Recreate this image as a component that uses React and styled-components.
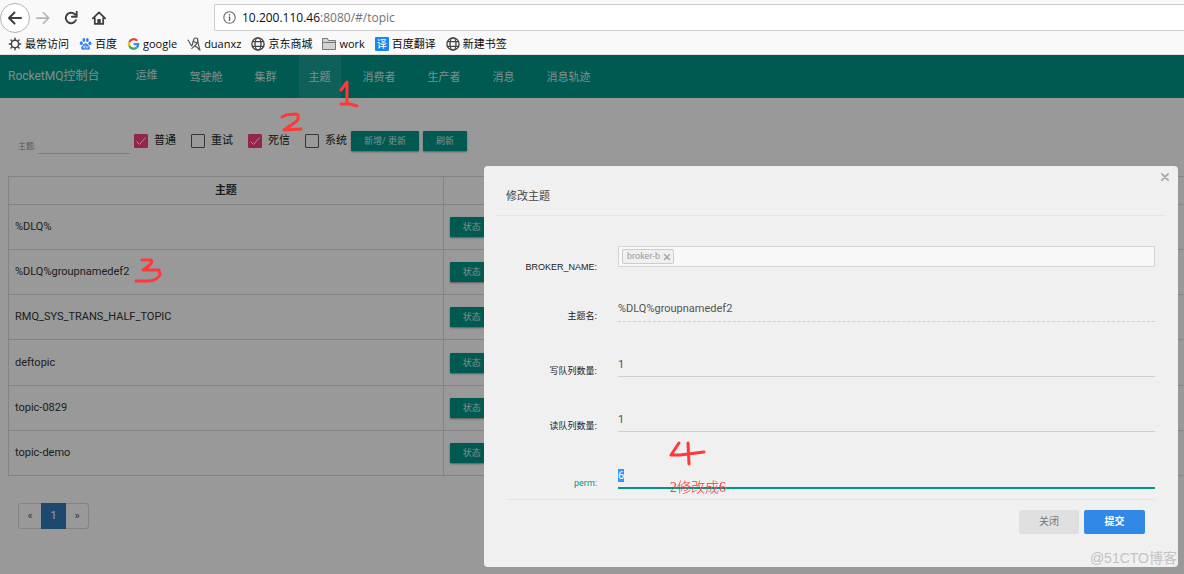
import React, { useEffect, useRef, useState } from "react";
import styled, { createGlobalStyle } from "styled-components";

const GlobalStyle = createGlobalStyle`
  *, *::before, *::after { box-sizing: border-box; }
  body { margin: 0; background: #fff; }
  button, input { font: inherit; }
`;

const ui = `Roboto, "Noto Sans CJK SC", sans-serif`;

const Shell = styled.div`
  position: relative;
  display: flex;
  flex-direction: column;
  min-height: 100vh;
  overflow: hidden;
  font-family: ${ui};
  font-size: 11px;
  line-height: 16px;
  color: #333;
`;

/* Browser chrome */
const Toolbar = styled.header`
  display: flex;
  align-items: center;
  gap: 14px;
  height: 35px;
  background: #f9f9fa;
`;

const NavButton = styled.button`
  display: flex;
  padding: 0;
  border: 0;
  background: none;
`;

const BackButton = styled(NavButton)`
  align-items: center;
  justify-content: center;
  width: 30px;
  height: 30px;
  margin-right: -8px;
  border: 1px solid #b5b5b6;
  border-radius: 50%;
  background: #fff;
`;

const AddressBar = styled.div`
  display: flex;
  flex: 1;
  align-items: center;
  gap: 6px;
  height: 27px;
  margin-left: 94px;
  padding-left: 8px;
  border: 1px solid #ccc;
  border-right: 0;
  border-radius: 2px 0 0 2px;
  background: #fff;
  font: 12px/20px "Open Sans", "Noto Sans", sans-serif;
  color: #737373;
`;

const Host = styled.span`
  color: #0c0c0d;
`;

const NavGroup = styled.div`
  display: flex;
  align-items: center;
  gap: 14px;
`;

const Bookmarks = styled.nav`
  display: flex;
  align-items: center;
  gap: 10px;
  height: 20px;
  padding: 0 8px 2px;
  background: #f9f9fa;
  border-bottom: 1px solid #e0e0e1;
`;

const Bookmark = styled.a`
  display: flex;
  align-items: center;
  gap: 3px;
  font: 11px/16px "Open Sans", "Noto Sans CJK SC", sans-serif;
  color: #0c0c0d;
  text-decoration: none;
  white-space: nowrap;
`;

/* Console page */
const Page = styled.div`
  position: relative;
  flex: 1;
  background: #fff;
`;

const TopNav = styled.nav`
  display: flex;
  align-items: stretch;
  gap: 12px;
  height: 43px;
  padding-left: 8px;
  background: #009688;
`;

const Brand = styled.a`
  padding: 13px 0;
  margin-right: 14px;
  font-size: 12px;
  color: rgba(255, 255, 255, 0.84);
  text-decoration: none;
  white-space: nowrap;
`;

const NavLink = styled.a`
  padding: ${(p) => (p.$raised ? "13px" : "15px")} 10px 0;
  background: ${(p) => (p.$active ? "rgba(255, 255, 255, 0.1)" : "transparent")};
  color: rgba(255, 255, 255, 0.84);
  text-decoration: none;
  white-space: nowrap;
`;

const Filters = styled.form`
  display: flex;
  align-items: flex-start;
  gap: 4px;
  height: 78px;
  padding: 33px 18px 0;
`;

const TopicFilter = styled.label`
  display: flex;
  align-items: flex-end;
  gap: 2px;
  height: 23px;
  font-size: 8px;
  line-height: 14px;
  color: #999;
`;

const TopicInput = styled.input`
  width: 92px;
  height: 23px;
  padding: 0;
  border: 0;
  border-bottom: 1px solid #d2d2d2;
  background: none;
`;

const CheckLabel = styled.label`
  display: flex;
  align-items: center;
  gap: 6px;
  height: 19px;
  margin-right: 11px;
  color: #222;
  white-space: nowrap;
  &:last-of-type { margin-right: 0; }
`;

const CheckBox = styled.input.attrs({ type: "checkbox" })`
  appearance: none;
  width: 14px;
  height: 14px;
  margin: 0;
  border: 1px solid #5a5a5a;
  border-radius: 1px;
  &:checked {
    border-color: #f53d7c;
    background: #f53d7c url("data:image/svg+xml,%3Csvg xmlns='http://www.w3.org/2000/svg' viewBox='0 0 12 12'%3E%3Cpath d='M1.5 6.5l3 3 6-7' fill='none' stroke='white'/%3E%3C/svg%3E");
  }
`;

const RaisedButton = styled.button`
  height: 20px;
  padding: 0 13px;
  border: 0;
  border-radius: 1px;
  background: #009688;
  box-shadow: 0 1px 2px rgba(0, 0, 0, 0.4);
  font-size: 9px;
  line-height: 20px;
  color: rgba(255, 255, 255, 0.84);
  white-space: nowrap;
`;

const TableWrap = styled.div`
  padding-left: 8px;
`;

const Table = styled.table`
  width: 100%;
  height: 300px;
  border-collapse: collapse;
  table-layout: fixed;
  border-left: 1px solid #ddd;
`;

const HeadCell = styled.th`
  width: ${(p) => p.$width};
  height: 28px;
  padding: 0 6px;
  border: 1px solid #ddd;
  border-right-color: ${(p) => (p.$last ? "transparent" : "#ddd")};
  font-weight: 700;
  text-align: center;
`;

const Cell = styled.td`
  padding: 0 6px;
  border: 1px solid #ddd;
  border-right-color: ${(p) => (p.$last ? "transparent" : "#ddd")};
  vertical-align: middle;
`;

const Pagination = styled.nav`
  display: flex;
  width: max-content;
  margin: 27px 18px;
  border: 1px solid #ddd;
  border-radius: 3px;
`;

const PageLink = styled.a`
  width: ${(p) => (p.$active ? "25px" : "22px")};
  margin: ${(p) => (p.$active ? "-1px 0" : "0")};
  line-height: ${(p) => (p.$active ? "26px" : "24px")};
  background: ${(p) => (p.$active ? "#337ab7" : "none")};
  color: ${(p) => (p.$active ? "#fff" : "#666")};
  text-align: center;
  text-decoration: none;
`;

/* Dialog */
const Overlay = styled.div`
  position: absolute;
  inset: 0;
  display: flex;
  align-items: flex-start;
  padding: 111px 6px 7px 484px;
  background: rgba(0, 0, 0, 0.4);
`;

const Dialog = styled.section`
  position: relative;
  flex: 1;
  padding: 0 12px 33px;
  border-radius: 4px;
  background: #f0f0f0;
  color: #444;
`;

const CloseX = styled.button`
  position: absolute;
  top: 6px;
  right: 8px;
  display: flex;
  padding: 0;
  border: 0;
  background: none;
`;

const DialogTitle = styled.h2`
  margin: 0;
  padding: 23px 10px 10px;
  border-bottom: 1px solid #e5e5e5;
  font-size: 11px;
  font-weight: 400;
  line-height: 16px;
`;

const DialogForm = styled.form`
  margin: 30px 11px 0 10px;
`;

const Field = styled.div`
  display: grid;
  grid-template-columns: 91px 1fr;
  column-gap: 21px;
  align-items: end;
  min-height: ${(p) => (p.$focused ? "30px" : "28px")};
  margin-top: ${(p) => (p.$second ? "21px" : "27px")};
`;

const BrokerField = styled(Field)`
  min-height: 27px;
  margin-top: 0;
`;

const FieldLabel = styled.label`
  font-family: ${(p) => (p.$focused ? "Roboto" : '"Liberation Sans"')}, "Noto Sans CJK SC", sans-serif;
  font-size: 9px;
  line-height: 12px;
  color: ${(p) => (p.$focused ? "#009688" : "#222")};
  text-align: right;
  white-space: nowrap;
`;

const TagBox = styled.div`
  align-self: start;
  display: flex;
  align-items: center;
  height: 21px;
  padding: 0 3px;
  border: 1px solid #d4d4d4;
  background: #f8f8f8;
`;

const Tag = styled.span`
  display: flex;
  align-items: center;
  gap: 3px;
  height: 15px;
  padding: 0 2px 0 4px;
  border: 1px solid #ccc;
  border-radius: 2px;
  background: #f0f0f0;
  font-size: 9px;
  line-height: 13px;
  color: #999;
`;

const TagRemove = styled.button`
  display: flex;
  padding: 0;
  border: 0;
  background: none;
`;

const TextInput = styled.input`
  width: 100%;
  height: 22px;
  padding: 0 0 2px;
  border: 0;
  border-bottom: 1px solid #cfcfcf;
  outline: 0;
  background: none;
  font-size: 11px;
  line-height: 14px;
  color: #555;
  &:disabled {
    height: 24px;
    border-bottom-style: dashed;
  }
  &:focus {
    height: 23px;
    border-bottom: 2px solid #009688;
  }
  &::selection {
    background: #3297fd;
    color: #fff;
  }
`;

const DialogFooter = styled.footer`
  display: flex;
  justify-content: flex-end;
  gap: 5px;
  margin: 10px 11px 0 10px;
  padding: 10px 10px 0;
  border-top: 1px solid #e5e5e5;
`;

const DialogButton = styled.button`
  width: ${(p) => (p.$primary ? "61px" : "60px")};
  height: 24px;
  padding: 0;
  border: 0;
  border-radius: 2px;
  background: ${(p) => (p.$primary ? "#3288e6" : "#e0e0e0")};
  font-size: 10px;
  font-weight: ${(p) => (p.$primary ? 700 : 400)};
  color: ${(p) => (p.$primary ? "#fff" : "#777")};
`;

/* Marks drawn over the page */
const Ink = styled.svg`
  position: absolute;
  inset: 0;
  width: 100%;
  height: 100%;
  pointer-events: none;
  fill: none;
  stroke: #ff3838;
  stroke-width: 3;
  stroke-linecap: round;
  stroke-linejoin: round;
`;

const InkNote = styled.span`
  position: absolute;
  top: 478px;
  left: 670px;
  font: 300 14px/20px "Liberation Serif", "Noto Sans CJK SC", serif;
  color: #f04040;
`;

const Watermark = styled.span`
  position: absolute;
  right: 7px;
  bottom: 6px;
  font: 14px/20px "Liberation Sans", "Noto Sans CJK SC", sans-serif;
  color: #c3c3c3;
`;

const Line = ({ size = 16, color = "#3f3f42", width = 2, children }) => (
  <svg width={size} height={size} viewBox="0 0 16 16" fill="none" stroke={color}
    strokeWidth={width} strokeLinecap="round" strokeLinejoin="round" aria-hidden="true">
    {children}
  </svg>
);

const Globe = () => (
  <Line size={14} color="#444" width={1.5}>
    <circle cx="8" cy="8" r="7" />
    <ellipse cx="8" cy="8" rx="3.4" ry="7" />
    <path d="M1.6 5.3h12.8M1.6 10.7h12.8" />
  </Line>
);

const Gear = () => (
  <Line size={14} color="#444" width={1.7}>
    <circle cx="8" cy="8" r="4.2" />
    <path d="M8 1.500v1.700M8 12.8v1.700M1.500 8h1.700M12.8 8h1.700M3.4 3.4l1.200 1.200M11.4 11.4l1.200 1.200M3.4 12.6l1.200-1.200M11.4 4.6l1.200-1.200" />
  </Line>
);

const Paw = () => (
  <svg width="13" height="14" viewBox="0 0 16 16" fill="#2f7ff0">
    <ellipse cx="2.8" cy="7" rx="1.8" ry="2.3" />
    <ellipse cx="6" cy="3" rx="1.7" ry="2.4" />
    <ellipse cx="10.3" cy="3" rx="1.7" ry="2.4" />
    <ellipse cx="13.4" cy="7.2" rx="1.8" ry="2.3" />
    <path d="M8 7c-2 0-2.6 1.800-4 3-1.700 1.500-1.800 5 1.200 5 1 0 1.800-.3 2.900-.3s1.900.3 2.900.3c3 0 3-3.500 1.200-5C10.700 8.800 10 7 8 7z" />
    <path d="M6.500 10.500a1.300 1.300 0 1 0 .6 2.500V9M9 10.300v2.500h2v-2.500" fill="none" stroke="#fff" strokeWidth=".8" />
  </svg>
);

const GoogleG = () => (
  <svg width="13" height="12" viewBox="0 0 16 16" fill="none" strokeWidth="3">
    <path d="M12.800 3.700A6.300 6.300 0 0 0 2.400 5.200" stroke="#ea4335" />
    <path d="M2.400 5.200a6.300 6.300 0 0 0 0 5.600" stroke="#fbbc05" />
    <path d="M2.400 10.800a6.300 6.300 0 0 0 9.700 2" stroke="#34a853" />
    <path d="M12.100 12.800A6 6 0 0 0 14.300 8H8.200" stroke="#4285f4" />
  </svg>
);

const Scribble = () => (
  <Line size={14} color="#555" width={1.4}>
    <path d="M1 3.500c1.500 0 2 5 4.200 6.500C6.500 9 6.800 7 6.800 5M12 5.500a2.600 2.600 0 1 1 0-3.500C13.200 4.500 11 9 5.500 13M12 3c.6 4 1.500 8 2.800 12M9 10.500c2 .5 3.500 2 5 4" />
  </Line>
);

const Folder = () => (
  <svg width="14" height="14" viewBox="0 0 14 14" fill="#d2d2d2" stroke="#777">
    <path d="M.5 12.500v-11h5l1 2h7v9z" />
    <path d="M.5 5.500h13" />
  </svg>
);

const TransBox = styled.span`
  width: 14px;
  height: 14px;
  border-radius: 1px;
  background: #1687f5;
  font-size: 10px;
  line-height: 14px;
  color: #fff;
  text-align: center;
`;

const Cross = ({ size, color }) => (
  <Line size={size} color={color} width={3}>
    <path d="M3 3l10 10M13 3L3 13" />
  </Line>
);

const bookmarks = [
  ["最常访问", <Gear />],
  ["百度", <Paw />],
  ["google", <GoogleG />],
  ["duanxz", <Scribble />],
  ["京东商城", <Globe />],
  ["work", <Folder />],
  ["百度翻译", <TransBox aria-hidden="true">译</TransBox>],
  ["新建书签", <Globe />],
];

const navItems = ["运维", "驾驶舱", "集群", "主题", "消费者", "生产者", "消息", "消息轨迹"];
const topics = ["%DLQ%", "%DLQ%groupnamedef2", "RMQ_SYS_TRANS_HALF_TOPIC", "deftopic", "topic-0829", "topic-demo"];
const kinds = [["普通", true], ["重试", false], ["死信", true], ["系统", false]];

function EditTopicDialog() {
  const permRef = useRef(null);
  const [writeQueues, setWriteQueues] = useState("1");
  const [readQueues, setReadQueues] = useState("1");
  const [perm, setPerm] = useState("6");

  useEffect(() => {
    permRef.current.focus();
    permRef.current.select();
  }, []);

  return (
    <Dialog role="dialog" aria-labelledby="dialog-title">
      <CloseX type="button" aria-label="关闭对话框"><Cross size={10} color="#aaa" /></CloseX>
      <DialogTitle id="dialog-title">修改主题</DialogTitle>
      <DialogForm>
        <BrokerField>
          <FieldLabel as="span" id="broker-label">BROKER_NAME:</FieldLabel>
          <TagBox role="group" aria-labelledby="broker-label">
            <Tag>broker-b<TagRemove type="button" aria-label="移除"><Cross size={8} color="#aaa" /></TagRemove></Tag>
          </TagBox>
        </BrokerField>
        <Field $second>
          <FieldLabel htmlFor="topic-name">主题名:</FieldLabel>
          <TextInput id="topic-name" value="%DLQ%groupnamedef2" disabled />
        </Field>
        <Field>
          <FieldLabel htmlFor="write-queues">写队列数量:</FieldLabel>
          <TextInput id="write-queues" value={writeQueues} onChange={(e) => setWriteQueues(e.target.value)} />
        </Field>
        <Field>
          <FieldLabel htmlFor="read-queues">读队列数量:</FieldLabel>
          <TextInput id="read-queues" value={readQueues} onChange={(e) => setReadQueues(e.target.value)} />
        </Field>
        <Field $focused>
          <FieldLabel htmlFor="perm" $focused>perm:</FieldLabel>
          <TextInput id="perm" ref={permRef} value={perm} onChange={(e) => setPerm(e.target.value)} />
        </Field>
      </DialogForm>
      <DialogFooter>
        <DialogButton type="button">关闭</DialogButton>
        <DialogButton type="button" $primary>提交</DialogButton>
      </DialogFooter>
    </Dialog>
  );
}

export default function App() {
  return (
    <Shell>
      <GlobalStyle />
      <Toolbar>
        <NavGroup>
          <BackButton aria-label="后退"><Line><path d="M14 8H2.500M7.500 2.500L2 8l5.500 5.500" /></Line></BackButton>
          <NavButton aria-label="前进"><Line size={14} color="#b4b4b5"><path d="M1 8h13M8.500 2l6 6-6 6" /></Line></NavButton>
          <NavButton aria-label="刷新页面"><Line size={14} width={2.2}><path d="M13.500 10.500A6 6 0 1 1 12.600 4M14.500 1v5.500H9" /></Line></NavButton>
          <NavButton aria-label="主页"><Line size={14}><path d="M1 8.500L8 1.500l7 7M3.200 8v6.800h9.600V8M7 14.500V10h2v4.500" /></Line></NavButton>
        </NavGroup>
        <AddressBar>
          <Line size={13} color="#666" width={1.3}>
            <circle cx="8" cy="8" r="7" />
            <path d="M8 7.500v4M8 4.500v.3" strokeWidth="1.800" />
          </Line>
          <span><Host>10.200.110.46</Host>:8080/#/topic</span>
        </AddressBar>
      </Toolbar>
      <Bookmarks>
        {bookmarks.map(([name, icon]) => (
          <Bookmark key={name} href="#">{icon}{name}</Bookmark>
        ))}
      </Bookmarks>
      <Page>
        <TopNav>
          <Brand href="#">RocketMQ控制台</Brand>
          {navItems.map((name, i) => (
            <NavLink key={name} href="#" $raised={i === 0} $active={name === "主题"}>{name}</NavLink>
          ))}
        </TopNav>
        <Filters>
          <TopicFilter>主题:<TopicInput /></TopicFilter>
          {kinds.map(([name, on]) => (
            <CheckLabel key={name}><CheckBox defaultChecked={on} />{name}</CheckLabel>
          ))}
          <RaisedButton type="button">新增/ 更新</RaisedButton>
          <RaisedButton type="button">刷新</RaisedButton>
        </Filters>
        <TableWrap>
          <Table>
            <thead>
              <tr>
                <HeadCell $width="37%">主题</HeadCell>
                <HeadCell $last />
              </tr>
            </thead>
            <tbody>
              {topics.map((topic) => (
                <tr key={topic}>
                  <Cell>{topic}</Cell>
                  <Cell $last><RaisedButton type="button">状态</RaisedButton></Cell>
                </tr>
              ))}
            </tbody>
          </Table>
        </TableWrap>
        <Pagination>
          <PageLink href="#">«</PageLink>
          <PageLink href="#" $active>1</PageLink>
          <PageLink href="#">»</PageLink>
        </Pagination>
        <Overlay><EditTopicDialog /></Overlay>
      </Page>
      <Ink aria-hidden="true">
        <path d="M341 90L347 82L347 104M341 104L350 104L357 106" />
        <path d="M282 117L286 115L296 114Q300 115 297 121L284 130L301 129" />
        <path d="M142 260L151 260Q154 263 143 270L159 270L160 275Q156 281 148 281L136 281" />
        <path d="M679 443L671 455L680 455L704 452M688 443L689 464" />
      </Ink>
      <InkNote>2修改成6</InkNote>
      <Watermark>@51CTO博客</Watermark>
    </Shell>
  );
}
